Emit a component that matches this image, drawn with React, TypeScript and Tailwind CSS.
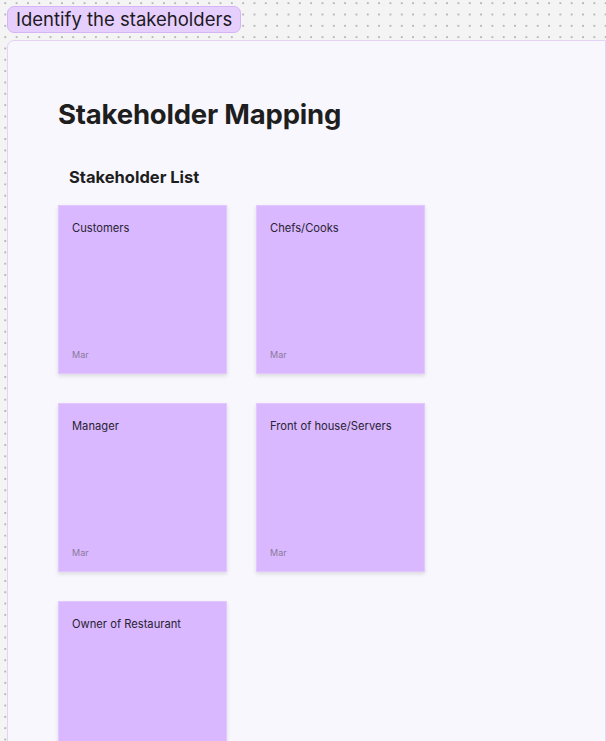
import React from 'react';

const stickies = [
  'Customers',
  'Chefs/Cooks',
  'Manager',
  'Front of house/Servers',
  'Owner of Restaurant',
];

function Sticky({ text }: { text: string }) {
  return (
    <div className="relative w-[169px] h-[169px] bg-[#d9b8ff] border border-[#e2c8ff] shadow-[0_2px_4px_rgba(0,0,0,0.12)] px-[13px] pt-[14px]">
      <p className="text-[11.2px] leading-[16px] text-[#2a2333]">{text}</p>
      <span className="absolute left-[13px] bottom-[13px] text-[9px] leading-[10px] text-[#8a7a9a]">Mar</span>
    </div>
  );
}

export default function App() {
  return (
    <div
      className="w-[606px] h-[741px] overflow-hidden flex flex-col bg-[#f4f4f4] bg-[radial-gradient(circle,#b8b8b8_0.8px,transparent_1px)] bg-[length:11.33px_11.33px] bg-[position:-0.4px_-2.5px]"
      style={{ fontFamily: 'Inter, "Noto Sans", sans-serif' }}
    >
      <div className="ml-[7px] mt-[6px] self-start h-[27px] flex items-center px-[8px] rounded-[7px] bg-[#e6cffd] border border-[#d5b5f5] text-[18.5px] text-[#1d1a22]">
        Identify the stakeholders
      </div>
      <div className="ml-[7px] mt-[7px] flex-1 bg-[#f9f7fe] border border-[#e4d3f7] rounded-tl-[7px] pl-[50px] pt-[55px]">
        <h1 className="text-[27.5px] leading-[36px] font-bold text-[#1e1e1e] tracking-[-0.2px]">Stakeholder Mapping</h1>
        <h2 className="mt-[34px] ml-[11px] text-[16.5px] leading-[22px] font-bold text-[#1e1e1e]">Stakeholder List</h2>
        <div className="mt-[17px] grid grid-cols-[169px_169px] gap-[29px]">
          {stickies.map((s) => (
            <Sticky key={s} text={s} />
          ))}
        </div>
      </div>
    </div>
  );
}
